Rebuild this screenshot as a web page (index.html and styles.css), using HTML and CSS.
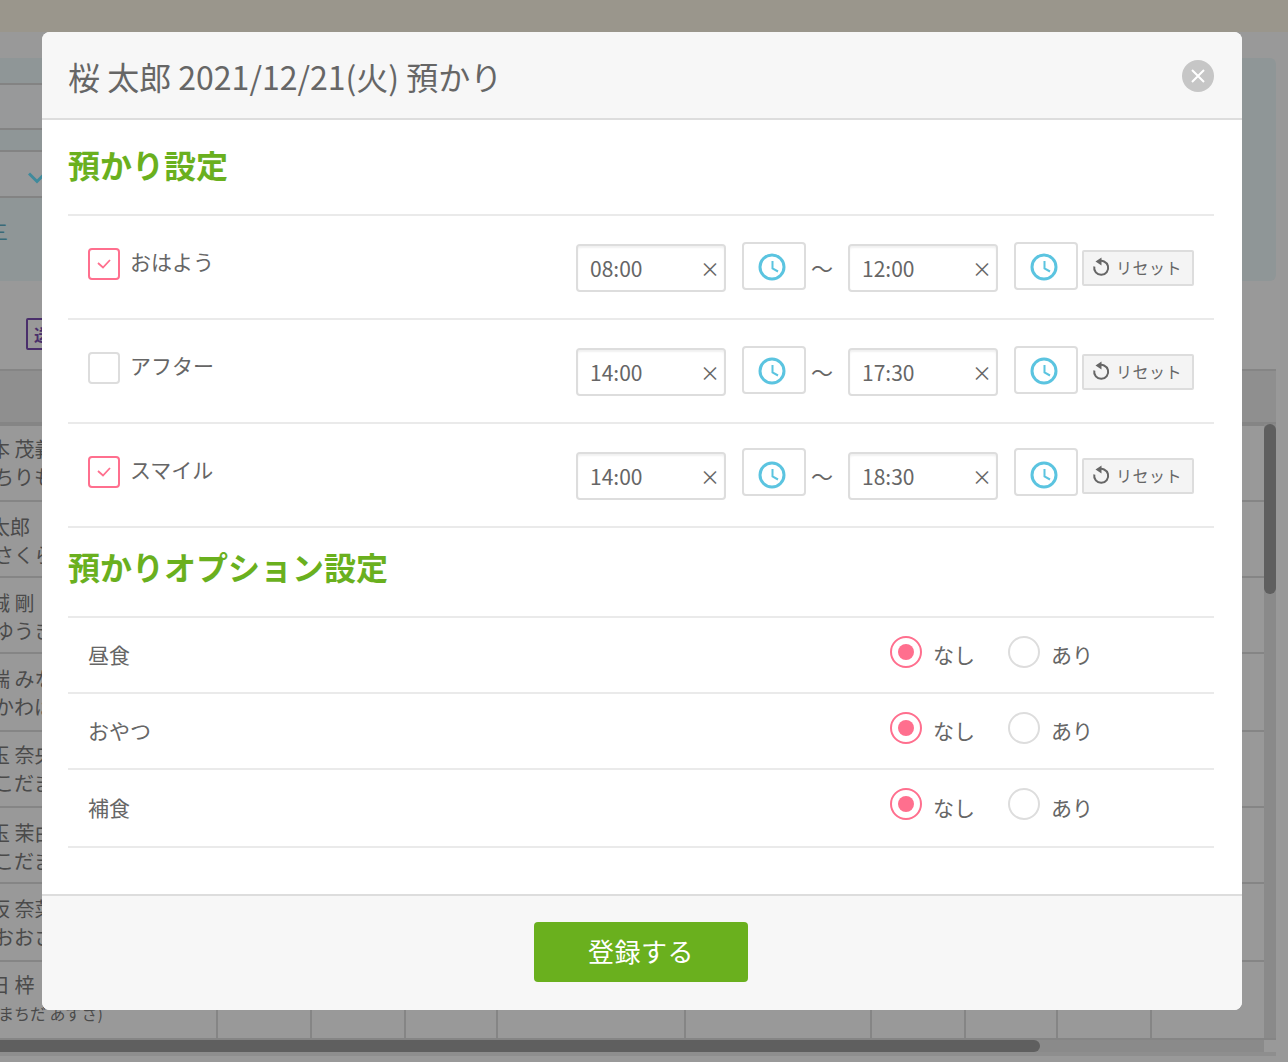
FILE: index.html
```html
<!DOCTYPE html>
<html lang="ja">
<head>
    <meta charset="UTF-8">
    <meta name="viewport" content="width=device-width, initial-scale=1.0">
    <title>預かり設定</title>
    <link rel="stylesheet" href="styles.css">
</head>
<body>

    <!-- 後ろの画面 -->
    <div class="backdrop">
        <div class="bg-top"></div>
        <div class="bg-panel">
            <div class="bg-band h27"></div>
            <div class="bg-band bg-plain h45"></div>
            <div class="bg-band h22"></div>
            <div class="bg-band bg-plain h46"></div>
            <div class="bg-menu">三</div>
        </div>
        <div class="bg-tools"><span class="bg-tag">送</span></div>
        <div class="bg-thead"></div>
        <div class="bg-rows">
            <div class="bg-row bg-row-up"><p>本 茂義</p><p>ちりも</p></div>
            <div class="bg-row"><p>太郎</p><p>さくら</p></div>
            <div class="bg-row"><p>誠 剛</p><p>ゆうき</p></div>
            <div class="bg-row bg-row-tall"><p>端 みな</p><p>かわは</p></div>
            <div class="bg-row bg-row-up"><p>玉 奈央</p><p>こだま</p></div>
            <div class="bg-row"><p>玉 茉由</p><p>こだま</p></div>
            <div class="bg-row bg-row-tall"><p>坂 奈菜</p><p>おおさ</p></div>
            <div class="bg-row bg-row-up bg-row-tall bg-row-end">
                <p>日 梓</p><p>まちだ あずさ)</p>
                <div class="bg-cols">
                    <i></i><i></i><i></i><i></i><i></i><i></i><i></i><i></i><i></i>
                </div>
            </div>
        </div>
        <div class="bg-hscroll"><div class="bg-htrack"><div class="bg-hthumb"></div></div></div>
        <svg class="bg-chevron" width="18" height="12" viewBox="0 0 18 12"><path d="M1 1.500l8 8 8-8" fill="none" stroke="#3f8a9c" stroke-width="3"/></svg>
        <div class="bg-vtrack"><div class="bg-vthumb"></div></div>
    </div>

    <div class="modal">
        <div class="modal-header">
            <h1>桜 太郎 2021/12/21(火) 預かり</h1>
            <button class="modal-close">
                <svg width="14" height="14" viewBox="0 0 14 14"><path d="M1 1l12 12M13 1L1 13" stroke="#fff" stroke-width="2"/></svg>
            </button>
        </div>

        <div class="modal-body">
            <h2 class="section-title">預かり設定</h2>

            <div class="time-row">
                <span class="check is-on"><svg width="14" height="10" viewBox="0 0 14 10"><path d="M1 4l5 4.500 7-7.500" fill="none" stroke="#ff6f8e" stroke-width="1.800"/></svg></span>
                <span class="row-name">おはよう</span>
                <div class="time-input">08:00<span class="clear">×</span></div>
                <button class="clock-btn"><svg width="28" height="28" viewBox="0 0 28 28"><circle cx="14" cy="14" r="12" fill="none" stroke="#5bc4e0" stroke-width="3"/><path d="M14.500 8v7.500l5.500 3" fill="none" stroke="#5bc4e0" stroke-width="2"/></svg></button>
                <span class="tilde">〜</span>
                <div class="time-input">12:00<span class="clear">×</span></div>
                <button class="clock-btn"><svg width="28" height="28" viewBox="0 0 28 28"><circle cx="14" cy="14" r="12" fill="none" stroke="#5bc4e0" stroke-width="3"/><path d="M14.500 8v7.500l5.500 3" fill="none" stroke="#5bc4e0" stroke-width="2"/></svg></button>
                <button class="reset-btn"><svg width="18" height="20" viewBox="0 0 18 20"><path d="M6 4.600A7 7 0 1 1 2.300 9.500" fill="none" stroke="#666" stroke-width="2"/><path d="M9.500 0.500v8L3.500 4.500z" fill="#666"/></svg>リセット</button>
            </div>

            <div class="time-row">
                <span class="check"></span>
                <span class="row-name">アフター</span>
                <div class="time-input">14:00<span class="clear">×</span></div>
                <button class="clock-btn"><svg width="28" height="28" viewBox="0 0 28 28"><circle cx="14" cy="14" r="12" fill="none" stroke="#5bc4e0" stroke-width="3"/><path d="M14.500 8v7.500l5.500 3" fill="none" stroke="#5bc4e0" stroke-width="2"/></svg></button>
                <span class="tilde">〜</span>
                <div class="time-input">17:30<span class="clear">×</span></div>
                <button class="clock-btn"><svg width="28" height="28" viewBox="0 0 28 28"><circle cx="14" cy="14" r="12" fill="none" stroke="#5bc4e0" stroke-width="3"/><path d="M14.500 8v7.500l5.500 3" fill="none" stroke="#5bc4e0" stroke-width="2"/></svg></button>
                <button class="reset-btn"><svg width="18" height="20" viewBox="0 0 18 20"><path d="M6 4.600A7 7 0 1 1 2.300 9.500" fill="none" stroke="#666" stroke-width="2"/><path d="M9.500 0.500v8L3.500 4.500z" fill="#666"/></svg>リセット</button>
            </div>

            <div class="time-row time-row-last">
                <span class="check is-on"><svg width="14" height="10" viewBox="0 0 14 10"><path d="M1 4l5 4.500 7-7.500" fill="none" stroke="#ff6f8e" stroke-width="1.800"/></svg></span>
                <span class="row-name">スマイル</span>
                <div class="time-input">14:00<span class="clear">×</span></div>
                <button class="clock-btn"><svg width="28" height="28" viewBox="0 0 28 28"><circle cx="14" cy="14" r="12" fill="none" stroke="#5bc4e0" stroke-width="3"/><path d="M14.500 8v7.500l5.500 3" fill="none" stroke="#5bc4e0" stroke-width="2"/></svg></button>
                <span class="tilde">〜</span>
                <div class="time-input">18:30<span class="clear">×</span></div>
                <button class="clock-btn"><svg width="28" height="28" viewBox="0 0 28 28"><circle cx="14" cy="14" r="12" fill="none" stroke="#5bc4e0" stroke-width="3"/><path d="M14.500 8v7.500l5.500 3" fill="none" stroke="#5bc4e0" stroke-width="2"/></svg></button>
                <button class="reset-btn"><svg width="18" height="20" viewBox="0 0 18 20"><path d="M6 4.600A7 7 0 1 1 2.300 9.500" fill="none" stroke="#666" stroke-width="2"/><path d="M9.500 0.500v8L3.500 4.500z" fill="#666"/></svg>リセット</button>
            </div>

            <h2 class="section-title section-title-2">預かりオプション設定</h2>

            <div class="option-row">
                <span class="option-name">昼食</span>
                <span class="radio is-on"></span><span class="radio-label">なし</span>
                <span class="radio radio-2"></span><span class="radio-label">あり</span>
            </div>
            <div class="option-row">
                <span class="option-name">おやつ</span>
                <span class="radio is-on"></span><span class="radio-label">なし</span>
                <span class="radio radio-2"></span><span class="radio-label">あり</span>
            </div>
            <div class="option-row option-row-last">
                <span class="option-name">補食</span>
                <span class="radio is-on"></span><span class="radio-label">なし</span>
                <span class="radio radio-2"></span><span class="radio-label">あり</span>
            </div>
        </div>

        <div class="modal-footer">
            <button class="submit-btn">登録する</button>
        </div>
    </div>

</body>
</html>
```

FILE: styles.css
```css
* { box-sizing: border-box; }
html, body {
    margin: 0;
    height: 1062px;
    overflow: hidden;
}
body {
    position: relative;
    font-family: "Noto Sans CJK JP", "Noto Sans", sans-serif;
    color: #666;
    background: #999;
}
button { font-family: inherit; cursor: pointer; }

/* 後ろの画面 */
.backdrop {
    position: absolute;
    inset: 0;
    overflow: hidden;
    background: #999;
    color: #4a4a4a;
}
.bg-top { height: 32px; background: #9a968c; }
.bg-panel {
    width: 1276px;
    height: 223px;
    margin-top: 26px;
    background: #8f9697;
    border-radius: 0 6px 6px 0;
}
.bg-band { width: 1200px; border-bottom: 2px solid #838383; }
.bg-plain { background: #98999a; }
.h27 { height: 27px; }
.h45 { height: 45px; }
.h22 { height: 22px; }
.h46 { height: 46px; }
.bg-menu {
    margin: 20px 0 0 -12px;
    font-size: 20px;
    line-height: 28px;
    color: #3a6a78;
}
.bg-tools { height: 88px; padding: 37px 0 0 26px; }
.bg-tag {
    display: block;
    width: 40px;
    height: 32px;
    border: 2px solid #4a2f6b;
    border-radius: 2px;
    padding-left: 6px;
    font-size: 16px;
    line-height: 28px;
    font-weight: 700;
    color: #4a2f6b;
}
.bg-thead {
    width: 1276px;
    height: 57px;
    background: #8f8f8f;
    border-top: 2px solid #858585;
    border-bottom: 4px solid #858585;
}
.bg-rows { width: 1276px; }
.bg-row {
    position: relative;
    height: 76px;
    padding-top: 11px;
    border-bottom: 2px solid #858585;
    font-size: 20px;
    line-height: 28px;
    white-space: nowrap;
}
.bg-row p { margin: 0 0 0 -6px; }
.bg-row p:first-child { margin-left: -10px; }
.bg-row-up { padding-top: 9px; }
.bg-row-tall { height: 78px; }
.bg-row-end p:nth-child(2) { margin-left: -2px; font-size: 16px; }
.bg-cols { position: absolute; inset: 0; }
.bg-cols i {
    position: absolute;
    top: 0;
    bottom: 0;
    width: 2px;
    background: #858585;
}
.bg-cols i:nth-child(1) { left: 216px; }
.bg-cols i:nth-child(2) { left: 310px; }
.bg-cols i:nth-child(3) { left: 404px; }
.bg-cols i:nth-child(4) { left: 496px; }
.bg-cols i:nth-child(5) { left: 684px; }
.bg-cols i:nth-child(6) { left: 870px; }
.bg-cols i:nth-child(7) { left: 964px; }
.bg-cols i:nth-child(8) { left: 1056px; }
.bg-cols i:nth-child(9) { left: 1150px; }
.bg-hscroll { height: 16px; width: 1276px; border-bottom: 4px solid #8e8e8e; }
.bg-htrack { width: 1264px; height: 12px; background: #8a8a8a; }
.bg-hthumb { width: 1040px; height: 12px; background: #5f5f5f; border-radius: 0 6px 6px 0; }
.bg-chevron { position: absolute; left: 28px; top: 172px; }
.bg-vtrack {
    position: absolute;
    left: 1264px;
    top: 424px;
    width: 12px;
    height: 614px;
    background: #8a8a8a;
}
.bg-vthumb { height: 170px; background: #5f5f5f; border-radius: 6px; }

/* モーダル */
.modal {
    position: absolute;
    left: 42px;
    top: 32px;
    width: 1200px;
    height: 978px;
    display: flex;
    flex-direction: column;
    background: #fff;
    border-radius: 8px;
    overflow: hidden;
}
.modal-header {
    height: 88px;
    padding: 0 28px 0 26px;
    display: flex;
    align-items: center;
    justify-content: space-between;
    background: #f7f7f7;
    border-bottom: 2px solid #ddd;
}
.modal-header h1 {
    margin: 2px 0 0;
    font-size: 32px;
    font-weight: 400;
    line-height: 1.4;
}
.modal-close {
    width: 32px;
    height: 32px;
    margin-top: 1px;
    padding: 0;
    border: 0;
    border-radius: 50%;
    background: #c6c6c6;
    display: flex;
    align-items: center;
    justify-content: center;
}
.modal-body { flex: 1; padding: 0 28px 0 26px; }
.section-title {
    height: 96px;
    margin: 0;
    padding-top: 22px;
    font-size: 32px;
    line-height: 44px;
    font-weight: 700;
    color: #6ab01e;
    border-bottom: 2px solid #eaeaea;
}
.section-title-2 { height: 90px; padding-top: 16px; }

/* 時間の行 */
.time-row {
    height: 104px;
    padding-left: 20px;
    padding-top: 26px;
    display: flex;
    align-items: flex-start;
    border-bottom: 2px solid #eaeaea;
}
.check {
    width: 32px;
    height: 32px;
    margin-top: 6px;
    border: 2px solid #ddd;
    border-radius: 4px;
    display: flex;
    align-items: center;
    justify-content: center;
}
.check.is-on { border-color: #ff6f8e; }
.row-name {
    width: 446px;
    margin-left: 10px;
    font-size: 21px;
    line-height: 38px;
}
.time-input {
    position: relative;
    width: 150px;
    height: 48px;
    margin-top: 2px;
    padding-left: 12px;
    border: 2px solid #ddd;
    border-radius: 4px;
    font-size: 21px;
    line-height: 44px;
    box-shadow: inset 0 2px 2px rgba(0, 0, 0, 0.06);
}
.clear {
    position: absolute;
    right: 4px;
    top: 0;
    font-size: 20px;
    line-height: 46px;
    color: #666;
}
.clock-btn {
    width: 64px;
    height: 48px;
    margin-left: 16px;
    padding: 6px 4px 0 0;
    border: 2px solid #ddd;
    border-radius: 4px;
    background: #fff;
}
.time-row-last .clock-btn { margin-top: -2px; padding-top: 10px; }
.tilde {
    width: 42px;
    padding-left: 5px;
    font-size: 22px;
    line-height: 50px;
}
.reset-btn {
    width: 112px;
    height: 36px;
    margin: 8px 0 0 4px;
    padding: 0 0 2px 8px;
    border: 2px solid #ddd;
    border-radius: 2px;
    background: #f4f4f4;
    color: #666;
    font-size: 16px;
    letter-spacing: 0.5px;
    display: flex;
    align-items: center;
    gap: 6px;
}

/* オプションの行 */
.option-row {
    height: 76px;
    padding: 0 0 2px 20px;
    display: flex;
    align-items: center;
    border-bottom: 2px solid #eaeaea;
    font-size: 21px;
}
.option-row-last { height: 78px; }
.option-name { width: 802px; }
.radio {
    position: relative;
    width: 32px;
    height: 32px;
    margin-bottom: 4px;
    border: 2px solid #ddd;
    border-radius: 50%;
}
.option-row-last .radio { margin-bottom: 6px; }
.radio.is-on { border-color: #ff6f8e; }
.radio.is-on::after {
    content: "";
    position: absolute;
    left: 6px;
    top: 6px;
    width: 16px;
    height: 16px;
    border-radius: 50%;
    background: #ff6f8e;
}
.radio-label { margin-left: 11px; width: 75px; }

.modal-footer {
    height: 116px;
    padding: 26px 2px 0 0;
    display: flex;
    justify-content: center;
    background: #f7f7f7;
    border-top: 2px solid #ddd;
}
.submit-btn {
    width: 214px;
    height: 60px;
    padding-bottom: 4px;
    border: 0;
    border-radius: 4px;
    background: #6ab01e;
    color: #fff;
    font-size: 26px;
    letter-spacing: 0.5px;
}
```
